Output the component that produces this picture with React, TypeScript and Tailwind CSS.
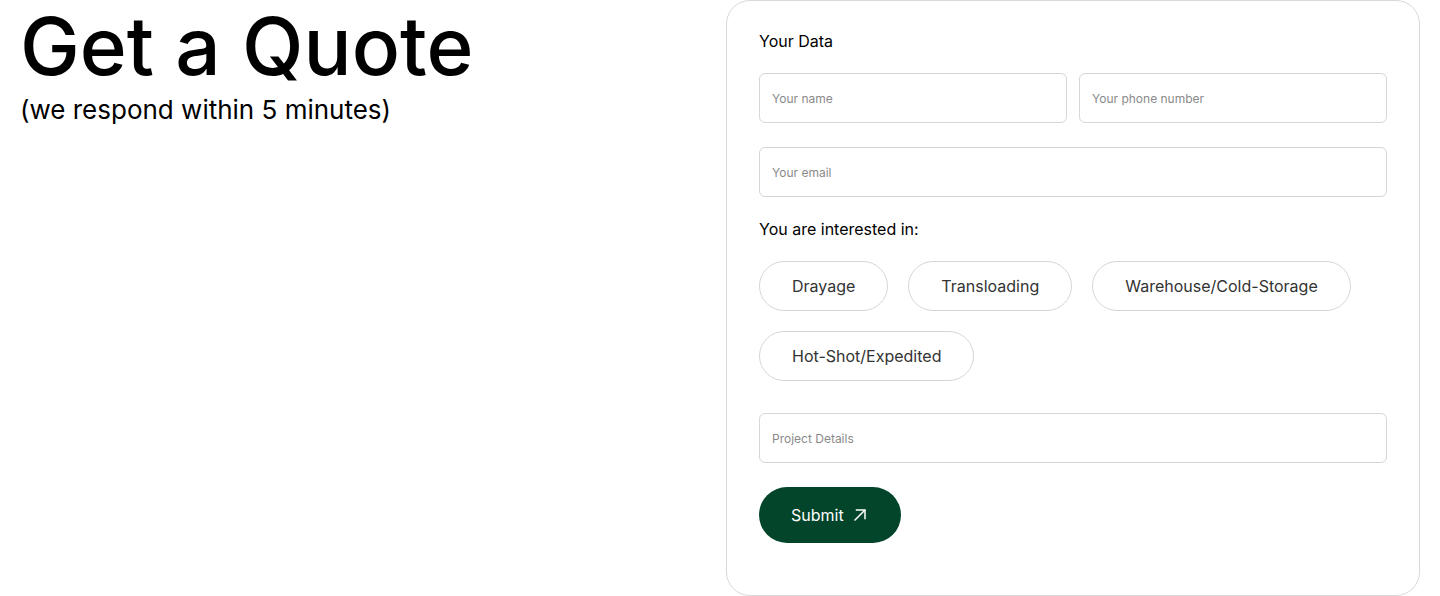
import React from 'react';

const services = ['Drayage', 'Transloading', 'Warehouse/Cold-Storage', 'Hot-Shot/Expedited'];

function Field({ placeholder }: { placeholder: string }) {
  return (
    <input
      type="text"
      placeholder={placeholder}
      className="h-[50px] w-full rounded-md border border-[#d6d6d6] bg-white px-3 text-xs text-[#333] outline-none placeholder:text-[#8a8a8a]"
    />
  );
}

function ArrowIcon() {
  return (
    <svg width="14" height="14" viewBox="0 0 14 14" fill="none" stroke="currentColor" strokeWidth="1.5" strokeLinecap="square">
      <path d="M2 12 L11.5 2.5" />
      <path d="M3.5 2 H12 V10.5" />
    </svg>
  );
}

export default function App() {
  return (
    <div className="grid grid-cols-2 gap-3 bg-white px-5 font-['Inter',sans-serif] text-black">
      <div>
        <h1 className="text-[80px] leading-[88px] font-medium mt-[2px]">Get a Quote</h1>
        <p className="text-[26px] leading-tight mt-[4px]">(we respond within 5 minutes)</p>
      </div>

      <form className="h-[596px] rounded-3xl border border-[#d9d9d9] px-8 pt-[30px]">
        <p className="text-base leading-5 mb-[22px]">Your Data</p>
        <div className="grid grid-cols-2 gap-3">
          <Field placeholder="Your name" />
          <Field placeholder="Your phone number" />
        </div>
        <div className="mt-6">
          <Field placeholder="Your email" />
        </div>

        <p className="text-base leading-5 mt-[22px] mb-[22px]">You are interested in:</p>
        <div className="flex flex-wrap gap-5">
          {services.map((s) => (
            <button
              key={s}
              type="button"
              className="h-[50px] rounded-full border border-[#d6d6d6] px-8 text-base text-[#333]"
            >
              {s}
            </button>
          ))}
        </div>

        <div className="mt-8">
          <Field placeholder="Project Details" />
        </div>

        <button
          type="button"
          className="mt-6 flex h-14 items-center gap-[9px] rounded-full bg-[#02452a] pl-8 pr-[34px] text-base text-white"
        >
          Submit
          <ArrowIcon />
        </button>
      </form>
    </div>
  );
}
